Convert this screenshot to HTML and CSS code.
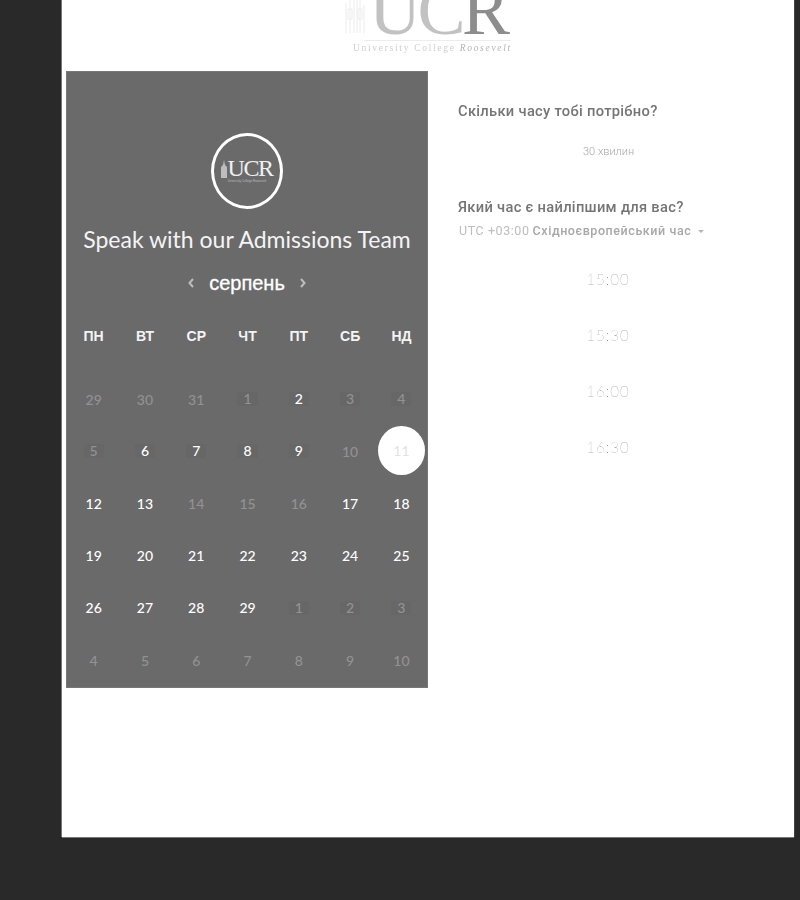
FILE: index.html
```html
<!DOCTYPE html>
<html lang="uk">
<head>
<meta charset="utf-8">
<title>Speak with our Admissions Team</title>
<link rel="stylesheet" href="styles.css">
</head>
<body>
<main class="sheet">
  <header class="brand">
    <div class="brand-mark">
      <svg class="brand-tower" viewBox="0 0 24 48" width="24" height="48" aria-hidden="true">
        <path d="M2 44V14M6 44V8M10 44V4M13 44V0M16 44V10M20 44V16M4 20h4v10H4zM14 20h4v10h-4z" fill="none" stroke="#ececec" stroke-width="1"/>
      </svg>
      <span class="brand-letters"><span class="brand-u">UC</span><span class="brand-r">R</span></span>
    </div>
    <div class="brand-rule"></div>
    <div class="brand-caption">University College <em>Roosevelt</em></div>
  </header>
  <div class="columns">
    <section class="calendar">
      <div class="badge">
        <svg class="badge-tower" viewBox="0 0 8 18" width="8" height="18" aria-hidden="true">
          <path d="M4 0L5 5L7 7V18H1V7L3 5Z" fill="#bdbdbd"/>
        </svg>
        <span class="badge-name">UCR</span>
        <span class="badge-caption">University College Roosevelt</span>
      </div>
      <h1 class="title">Speak with our Admissions Team</h1>
      <div class="month">
        <svg class="chev" viewBox="0 0 8 12" width="8" height="12" aria-hidden="true"><path d="M6 2L2.500 6L6 10" fill="none" stroke="#bdbdbd" stroke-width="2"/></svg>
        <span class="month-name">серпень</span>
        <svg class="chev" viewBox="0 0 8 12" width="8" height="12" aria-hidden="true"><path d="M2 2L5.500 6L2 10" fill="none" stroke="#bdbdbd" stroke-width="2"/></svg>
      </div>
      <div class="weekdays">
        <span>ПН</span><span>ВТ</span><span>СР</span><span>ЧТ</span><span>ПТ</span><span>СБ</span><span>НД</span>
      </div>
      <div class="days">
        <span class="off">29</span><span class="off">30</span><span class="off">31</span><span class="off"><b>1</b></span><span><b>2</b></span><span class="off"><b>3</b></span><span class="off"><b>4</b></span>
        <span class="off"><b>5</b></span><span><b>6</b></span><span><b>7</b></span><span><b>8</b></span><span><b>9</b></span><span class="off">10</span><span class="picked"><i>11</i></span>
        <span>12</span><span>13</span><span class="off">14</span><span class="off">15</span><span class="off">16</span><span>17</span><span>18</span>
        <span>19</span><span>20</span><span>21</span><span>22</span><span>23</span><span>24</span><span>25</span>
        <span>26</span><span>27</span><span>28</span><span>29</span><span class="off"><b>1</b></span><span class="off"><b>2</b></span><span class="off"><b>3</b></span>
        <span class="off">4</span><span class="off">5</span><span class="off">6</span><span class="off">7</span><span class="off">8</span><span class="off">9</span><span class="off">10</span>
      </div>
    </section>
    <section class="details">
      <h2 class="question">Скільки часу тобі потрібно?</h2>
      <div class="duration">30 хвилин</div>
      <h2 class="question">Який час є найліпшим для вас?</h2>
      <div class="zone">UTC +03:00 <strong>Східноєвропейський час</strong><span class="caret"></span></div>
      <ul class="slots">
        <li>15:00</li>
        <li>15:30</li>
        <li>16:00</li>
        <li>16:30</li>
      </ul>
    </section>
  </div>
</main>
</body>
</html>
```

FILE: styles.css
```css
* { box-sizing: border-box; }
html, body { margin: 0; height: 900px; overflow: hidden; }
body { background: #292929; padding: 0 6px 0 62px; font-family: "Liberation Sans", sans-serif; }

.sheet { background: #fff; height: 837px; padding: 0 0 0 4px; box-shadow: 0 1px 0 #777, -1px 0 0 #777, 1px 0 0 #444; }

.brand { height: 71px; position: relative; overflow: hidden; will-change: transform; }
.brand-mark { position: absolute; left: 278px; top: -22px; display: flex; align-items: flex-end; height: 65px; }
.brand-tower { margin-right: 1px; margin-bottom: 6px; }
.brand-letters { font-family: "Liberation Serif", serif; font-size: 72px; line-height: 65px; letter-spacing: -3.500px; }
.brand-u { color: #c2c2c2; }
.brand-r { color: #8d8d8d; }
.brand-rule { position: absolute; left: 298px; top: 40px; width: 147px; height: 1px; background: #ececec; }
.brand-caption { position: absolute; left: 287px; top: 43px; width: 170px; font-family: "Liberation Serif", serif; font-size: 9.500px; letter-spacing: 1.700px; color: #cfcfcf; white-space: nowrap; }
.brand-caption em { color: #b4b4b4; }

.columns { display: flex; }

.calendar { width: 362px; height: 617px; background: #6a6a6a; padding-top: 62px; color: #fff; box-shadow: inset 0 0 0 1px #777; }

.badge { width: 72px; height: 76px; margin: 0 auto; border: 3px solid #fff; border-radius: 50%; position: relative; display: flex; justify-content: center; align-items: center; padding: 0 0 6px 6px; }
.badge-tower { position: absolute; left: 6px; top: 24px; }
.badge-name { font-family: "Liberation Serif", serif; font-size: 24px; line-height: 24px; letter-spacing: -1.500px; color: #f0f0f0; }
.badge-caption { position: absolute; left: 8px; top: 43px; width: 50px; font-size: 3px; line-height: 4px; color: #bbb; white-space: nowrap; overflow: hidden; text-align: center; }

.title { margin: 15px 0 0; text-align: center; font-family: Lato, sans-serif; font-weight: 400; font-size: 23px; line-height: 30px; color: #f4f4f4; white-space: nowrap; }

.month { margin-top: 15px; height: 28px; display: flex; justify-content: center; align-items: center; gap: 14px; }
.month-name { font-size: 20px; line-height: 28px; font-weight: 400; -webkit-text-stroke: 0.300px #fff; }

.weekdays { margin-top: 31px; padding: 0 2px; display: grid; grid-template-columns: repeat(7, 51.300px); text-align: center; font-size: 14px; font-weight: 700; line-height: 16px; color: #f4f4f4; }

.days { margin-top: 29px; padding: 0 2px; display: grid; grid-template-columns: repeat(7, 51.300px); grid-auto-rows: 52.200px; text-align: center; font-family: Lato, sans-serif; font-size: 14px; font-weight: 500; color: #fff; }
.days > span { display: flex; align-items: center; justify-content: center; }
.days b { display: block; font-weight: inherit; line-height: 14px; padding: 0 6px; background: #676767; }
.days .off { color: #929292; }
.days .picked { position: relative; }
.days .picked i { font-style: normal; width: 47px; height: 49px; flex: none; margin-top: -2px; border-radius: 50%; background: #fff; color: #e3e3e3; display: flex; align-items: center; justify-content: center; font-weight: 400; }

.details { width: 330px; margin-left: 30px; padding-top: 31px; will-change: transform; }
.question { margin: 0; font-family: Roboto, sans-serif; font-weight: 500; font-size: 14.700px; line-height: 18px; letter-spacing: 0.300px; color: #757575; white-space: nowrap; }
.duration { margin: 24px 0 38px; padding-left: 125px; font-family: Roboto, sans-serif; font-size: 11px; font-weight: 300; line-height: 16px; color: #a8a8a8; }
.zone { margin-top: 7px; padding-left: 1px; font-family: Roboto, sans-serif; font-size: 12.500px; line-height: 16px; letter-spacing: 0.570px; color: #bdbdbd; white-space: nowrap; display: flex; align-items: center; gap: 3px; }
.zone strong { font-weight: 500; color: #a8a8a8; }
.caret { margin-left: 4px; margin-top: 1px; border: 3px solid transparent; border-top-color: #b5b5b5; border-bottom: 0; }

.slots { list-style: none; margin: 20px 0 0; padding: 0; width: 300px; }
.slots li { height: 56px; line-height: 40px; text-align: center; font-family: Lato, sans-serif; font-weight: 100; font-size: 15px; letter-spacing: 1px; color: #707070; }
```
